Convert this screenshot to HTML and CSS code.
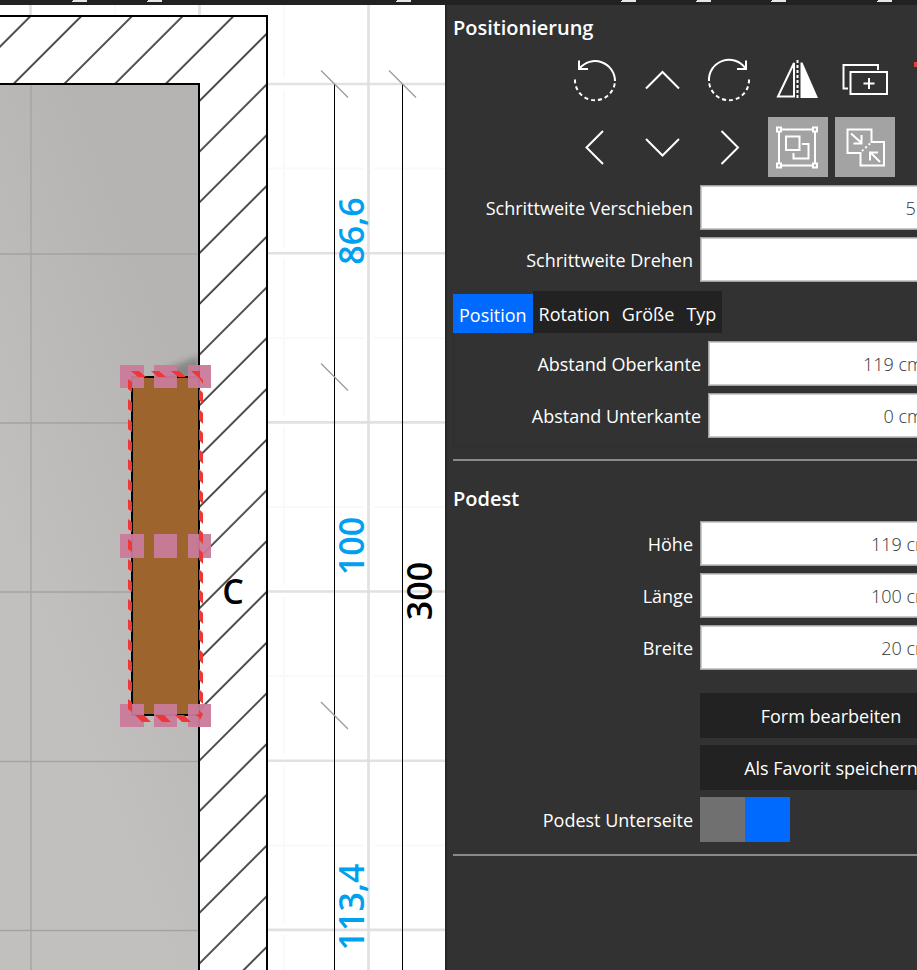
FILE: index.html
```html
<!DOCTYPE html>
<html lang="de">
<head>
<meta charset="utf-8">
<title>Raumplaner</title>
<link rel="stylesheet" href="styles.css">
</head>
<body>
<header class="topbar">
  <svg class="topbar-icons" width="917" height="5" aria-hidden="true">
    <path d="M73 0h14v2h-15v-1h1zM148 0h14v2h-15v-1h1zM397 0h14v2h-15v-1h1zM622 0h14v2h-15v-1h1zM697 0h14v2h-15v-1h1zM772 0h14v2h-15v-1h1zM878 0h14v2h-15v-1h1z"/>
  </svg>
</header>
<main class="workspace">
  <section class="plan" aria-label="Grundriss">
    <svg class="plan-drawing" viewBox="0 5 445 965" preserveAspectRatio="xMinYMin slice" role="img" aria-label="Podest im Raum">
      <defs>
        <linearGradient id="floor" gradientUnits="userSpaceOnUse" x1="0" y1="520" x2="210" y2="440">
          <stop offset="0" stop-color="#c1c0be"/>
          <stop offset="1" stop-color="#b5b4b2"/>
        </linearGradient>
        <pattern id="hatch" patternUnits="userSpaceOnUse" x="-18" width="35.88" height="36" patternTransform="translate(300.4 0) rotate(45)">
          <path d="M18 0V36" stroke="#222" stroke-width="1.6"/>
        </pattern>
        <filter id="soft" x="-50%" y="-50%" width="200%" height="200%"><feGaussianBlur stdDeviation="3"/></filter>
        <clipPath id="room"><path d="M0 84H199V970H0z"/></clipPath>
        <path id="dashL" d="M128 379l4 3v10l-4-3z"/>
        <path id="dashR" d="M199 389l4 4v11l-4-4z"/>
        <path id="tick" d="M-13.5-13.5l27 27" stroke="#999" stroke-width="1.2"/>
      </defs>
      <rect y="5" width="445" height="965" fill="#fff"/>
      <g stroke="#f9f9f9" stroke-width="2">
        <path d="M115 5V16M284 5V78M284 90V247M284 259V416M284 428V585M284 597V754M284 766V923M284 935V970"/>
        <path d="M268 168.500H363M374 168.500H445M268 338H363M374 338H445M268 507H363M374 507H445M268 676H363M374 676H445M268 845.500H363M374 845.500H445"/>
      </g>
      <g stroke="#dfdddf" stroke-opacity=".9" stroke-width="2.600">
        <path d="M30.500 5V16M199.500 5V16M368.500 5V970"/>
        <path d="M268 84H445M268 253.200H445M268 422.400H445M268 591.500H445M268 760.700H445M268 929.900H445"/>
      </g>
      <path d="M0 16H267V970H199V84H0z" fill="#fff"/>
      <path d="M0 16H267V970H199V84H0z" fill="url(#hatch)"/>
      <path d="M0 84H199V970H0z" fill="url(#floor)"/>
      <path d="M31 84V970M0 254H199M0 423H199M0 592H199M0 761.500H199M0 930.500H199" stroke="#a4a3a1" stroke-width="1.300" fill="none"/>
      <g clip-path="url(#room)">
        <path d="M158 372L199 356V380H158zM184 715H203V727z" fill="#777" opacity=".75" filter="url(#soft)"/>
      </g>
      <path d="M0 16H267V972M0 84H199V972" stroke="#000" stroke-width="2" fill="none"/>
      <rect x="132" y="377" width="67" height="338" fill="#9d642d" stroke="#000" stroke-width="2"/>
      <g fill="#c97b9a" fill-opacity=".95">
        <path d="M120 365h24v23h-24zM154 365h23v23h-23zM188 365h23v23h-23z"/>
        <path d="M120 534h24v24h-24zM154 534h23v24h-23zM188 534h23v24h-23z"/>
        <path d="M120 704h24v23h-24zM154 704h23v23h-23zM188 704h23v23h-23z"/>
      </g>
      <g fill="#ee3838">
        <g id="left4"><use href="#dashL"/><use href="#dashL" y="20"/><use href="#dashL" y="40"/><use href="#dashL" y="60"/></g>
        <use href="#left4" y="80"/><use href="#left4" y="160"/><use href="#left4" y="240"/><use href="#dashL" y="320"/>
        <g id="right4"><use href="#dashR"/><use href="#dashR" y="20"/><use href="#dashR" y="40"/><use href="#dashR" y="60"/></g>
        <use href="#right4" y="80"/><use href="#right4" y="160"/><use href="#right4" y="240"/>
        <path d="M131 371h8l7 6h-8zM151 371h8l7 6h-8zM171 371h8l7 6h-8zM191 371h9v6l3 3v4l-4-6z"/>
        <path d="M135 715h9l7 7h-9zM155 715h9l7 7h-9zM175 715h9l7 7h-9zM195 715l4-1v-4l4 4-3 6-1-3z"/>
      </g>
      <path d="M334.500 84V970M402.500 84V970" stroke="#000" stroke-width="1"/>
      <use href="#tick" x="334.500" y="84"/><use href="#tick" x="402.500" y="84"/>
      <use href="#tick" x="334.500" y="377"/><use href="#tick" x="334.500" y="715.500"/>
      <text class="wall-name" x="233" y="604">C</text>
      <text class="dim" transform="translate(364 231) rotate(-90)">86,6</text>
      <text class="dim" transform="translate(364 546) rotate(-90)">100</text>
      <text class="dim" transform="translate(364 907) rotate(-90)">113,4</text>
      <text class="dim dim-total" transform="translate(432 591) rotate(-90)">300</text>
    </svg>
  </section>

  <aside class="panel">
    <form class="panel-content">
      <section class="group">
        <h2 class="title">Positionierung</h2>
        <div class="tools">
          <button type="button" class="tool" aria-label="Nach links drehen"><svg viewBox="0 0 60 60">
            <path d="M12.500 18.500A20 20 0 0 1 48 31"/><path d="M12 10.500v8.500h9"/><path d="M8 29.500A20 20 0 0 0 48 31" stroke-dasharray="4 3"/></svg></button>
          <button type="button" class="tool" aria-label="Nach oben"><svg viewBox="0 0 60 60"><path d="M12 38.500L28.500 22 45 38.500"/></svg></button>
          <button type="button" class="tool" aria-label="Nach rechts drehen"><svg viewBox="0 0 60 60">
            <path d="M44.500 18.500A20 20 0 0 0 8 31"/><path d="M45 10.500v8.500h-9"/><path d="M48 29.500A20 20 0 0 1 8 31" stroke-dasharray="4 3"/></svg></button>
          <button type="button" class="tool" aria-label="Spiegeln"><svg viewBox="0 0 60 60">
            <path d="M26 13V46.500H10z"/><path d="M29.500 10V50" stroke-dasharray="3 2"/><path class="solid" d="M32.500 12.500h2L50 48H32.500z"/></svg></button>
          <button type="button" class="tool" aria-label="Duplizieren"><svg viewBox="0 0 60 60">
            <path d="M13 38.500H8.500V15H43v5"/><path d="M15.500 22H52V44H15.500z"/><path d="M34 28V39M28.500 33.500h11"/></svg></button>
          <button type="button" class="tool tool-delete" aria-label="Löschen"><svg viewBox="0 0 60 60"><path class="solid" d="M12 12H47v5H12z"/></svg></button>
          <button type="button" class="tool" aria-label="Nach links"><svg viewBox="0 0 60 60"><path d="M36 14L19.500 30.500 36 47"/></svg></button>
          <button type="button" class="tool" aria-label="Nach unten"><svg viewBox="0 0 60 60"><path d="M12 22L28.500 38.500 45 22"/></svg></button>
          <button type="button" class="tool" aria-label="Nach rechts"><svg viewBox="0 0 60 60"><path d="M20.500 14L37 30.500 20.500 47"/></svg></button>
          <button type="button" class="tool tool-active" aria-label="Gruppieren"><svg viewBox="0 0 60 60">
            <path d="M13 12.500H45M13 48.500H45M11 15V46M47 15V46"/><path d="M9 10.500h4v4h-4zM45 10.500h4v4h-4zM9 46.500h4v4h-4zM45 46.500h4v4h-4z"/><path d="M18 19.500H31.500V33H18zM34 27h6.500V41.500H25.500V36"/></svg></button>
          <button type="button" class="tool tool-active" aria-label="Verschmelzen"><svg viewBox="0 0 60 60">
            <path d="M25.500 36H12.500V12.500H36.500V25H49V48.500H25.500V35"/><path d="M27 34L36 25.500" stroke-dasharray="2 2.500"/><path d="M16 16.500l10 9M26.500 18v8.500h-8M45 45L35.500 35.500M35 43.500V35.500h8"/></svg></button>
        </div>
        <div class="row"><label for="step-move">Schrittweite Verschieben</label><input class="field field-plain" id="step-move" type="text" value="5 cm"></div>
        <div class="row"><label for="step-turn">Schrittweite Drehen</label><input class="field field-plain" id="step-turn" type="text"></div>
        <div class="tabs" role="tablist">
          <button type="button" class="tab tab-current" role="tab" aria-selected="true">Position</button>
          <button type="button" class="tab" role="tab">Rotation</button>
          <button type="button" class="tab" role="tab">Größe</button>
          <button type="button" class="tab" role="tab">Typ</button>
        </div>
        <div class="tab-page" role="tabpanel">
          <div class="row"><label for="top">Abstand Oberkante</label><input class="field" id="top" type="text" value="119 cm"></div>
          <div class="row"><label for="bottom">Abstand Unterkante</label><input class="field" id="bottom" type="text" value="0 cm"></div>
        </div>
      </section>
      <section class="group">
        <h2 class="title title-object">Podest</h2>
        <div class="row"><label for="height">Höhe</label><input class="field" id="height" type="text" value="119 cm"></div>
        <div class="row"><label for="length">Länge</label><input class="field" id="length" type="text" value="100 cm"></div>
        <div class="row"><label for="width">Breite</label><input class="field" id="width" type="text" value="20 cm"></div>
        <div class="row row-spaced"><button type="button" class="action">Form bearbeiten</button></div>
        <div class="row"><button type="button" class="action">Als Favorit speichern</button></div>
        <div class="row"><label for="underside">Podest Unterseite</label><input class="switch" id="underside" type="checkbox" checked></div>
      </section>
    </form>
  </aside>
</main>
</body>
</html>
```
FILE: styles.css
```css
* {
  box-sizing: border-box;
}

body {
  margin: 0;
  min-height: 100vh;
  display: flex;
  flex-direction: column;
  overflow: hidden;
  background: #222;
  color: #fff;
  font: 18px/24px "Open Sans", sans-serif;
}

.topbar {
  height: 5px;
  overflow: hidden;
}

.topbar-icons {
  display: block;
  fill: #e4e6e8;
}

.workspace {
  flex: 1;
  display: grid;
  grid-template-columns: minmax(0, 1fr) 472px;
}

.plan {
  position: relative;
  overflow: hidden;
  background: #fff;
}

.plan-drawing {
  position: absolute;
  width: 100%;
  height: 100%;
}

.wall-name,
.dim {
  font-size: 34px;
  font-weight: 600;
  text-anchor: middle;
}

.dim {
  fill: #00a0f0;
}

.dim-total {
  fill: #000;
}

.panel {
  overflow: hidden;
  border-left: 2px solid #262626;
  background: #323232;
}

.panel-content {
  width: 515px;
  padding: 0 0 0 6px;
}

.group {
  display: flex;
  flex-direction: column;
  gap: 7px;
  padding-bottom: 12px;
  border-bottom: 2px solid #8a8a8a;
}

.title {
  margin: 0;
  padding-top: 8px;
  font-size: 20px;
  line-height: 30px;
  font-weight: 600;
}

.title-object {
  padding-top: 23px;
}

.tools {
  display: grid;
  grid-template-columns: repeat(6, 60px);
  justify-content: end;
  gap: 7px;
  margin-bottom: 1px;
}

.tool {
  height: 60px;
  padding: 0;
  border: 0;
  background: none;
}

.tool svg {
  display: block;
  fill: none;
  stroke: #fff;
  stroke-width: 2;
}

.tool .solid {
  fill: #fff;
  stroke: none;
}

.tool-delete .solid {
  fill: #e04040;
}

.tool-active {
  background: #a3a3a3;
}

.row {
  display: grid;
  grid-template-columns: 240px minmax(0, 1fr);
  column-gap: 7px;
  align-items: center;
  min-height: 45px;
}

.row label {
  text-align: right;
}

.row-spaced {
  margin-top: 16px;
}

.field {
  width: 100%;
  height: 45px;
  padding: 0 30px 0 8px;
  border: 1px solid #a0a0a0;
  box-shadow: inset 0 0 0 1px #ccc;
  background: #fff;
  color: #333;
  font: inherit;
  font-weight: 300;
  text-align: right;
}

.field-plain {
  padding-right: 16px;
}

.tabs {
  display: flex;
  align-items: flex-end;
  margin-top: 2px;
}

.tab {
  height: 42px;
  padding: 3px 6px 0;
  border: 0;
  background: #222;
  color: #fff;
  font: inherit;
}

.tab-current {
  height: 39px;
  background: #006aff;
}

.tab-page {
  display: flex;
  flex-direction: column;
  gap: 7px;
  margin-top: -7px;
  padding: 8px 7px;
  border: 1px solid #2e2e2e;
  border-top: 0;
}

.action {
  grid-column: 2;
  height: 45px;
  border: 0;
  background: #222;
  color: #fff;
  font: inherit;
}

.switch {
  appearance: none;
  width: 90px;
  height: 45px;
  margin: 0;
  background: linear-gradient(to right, #707070 50%, #006aff 50%);
}
```
